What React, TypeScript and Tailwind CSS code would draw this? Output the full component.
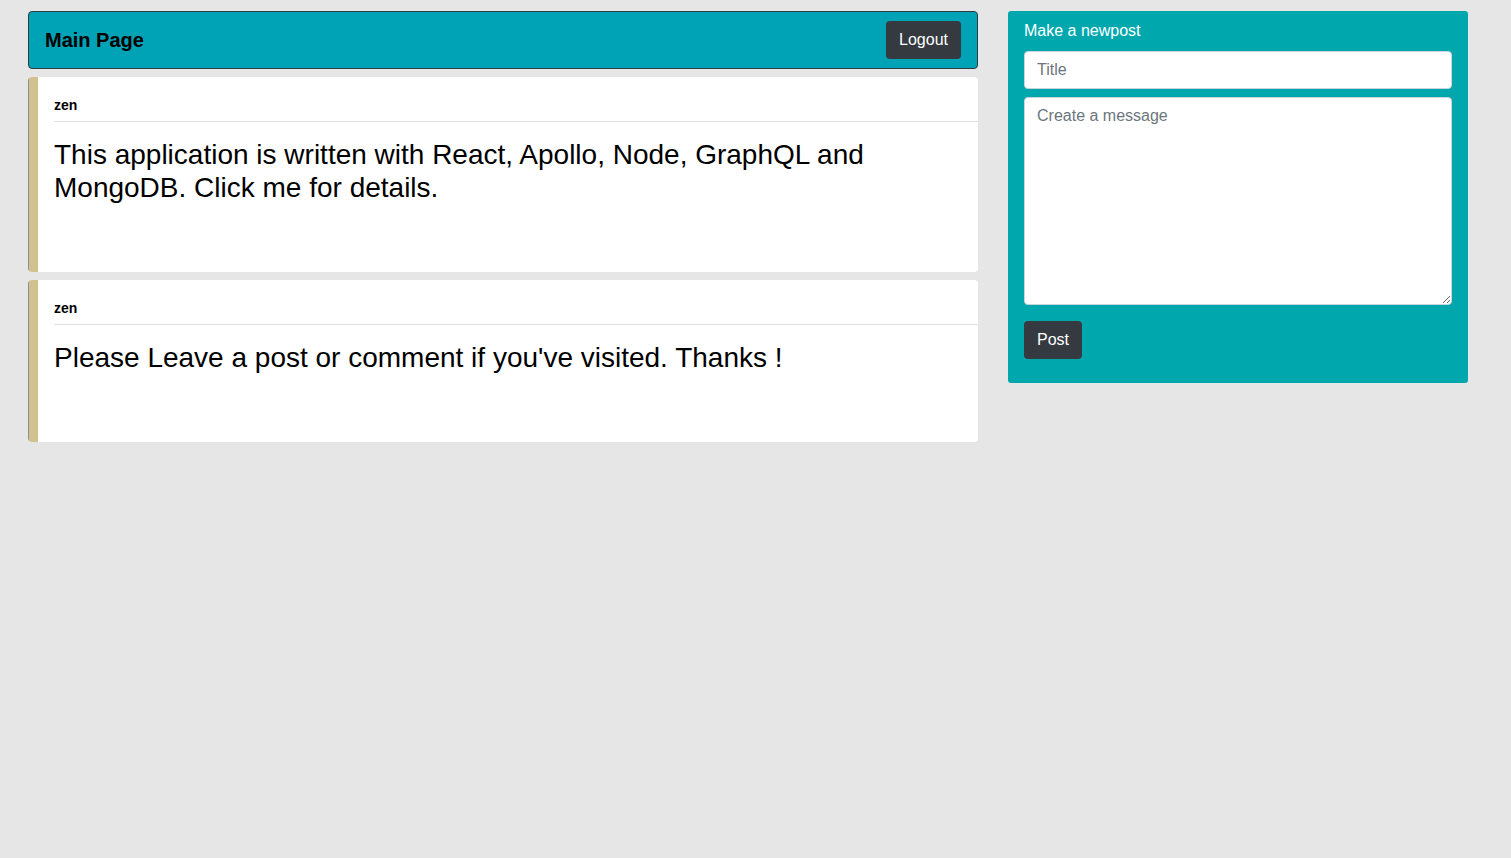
import React from 'react';

const posts = [
  {
    author: 'zen',
    body: 'This application is written with React, Apollo, Node, GraphQL and MongoDB. Click me for details.',
  },
  {
    author: 'zen',
    body: "Please Leave a post or comment if you've visited. Thanks !",
  },
];

const PostCard = ({ author, body }: { author: string; body: string }) => (
  <div className="flex bg-white rounded-[4px] overflow-hidden cursor-pointer">
    <div className="w-px bg-[#8e8e8e]" />
    <div className="w-[9px] bg-[#d0c28e]" />
    <div className="flex-1 pl-4">
      <div className="pt-[20px] pb-[7px] border-b border-[#e2e2e2] text-[14px] leading-[17px] font-bold text-black">
        {author}
      </div>
      <p className="pt-[16px] pb-[68px] pr-24 text-[28px] leading-[33px] text-black">{body}</p>
    </div>
  </div>
);

export default function App() {
  return (
    <div
      className="min-h-screen bg-[#e6e6e6] pl-[28px] pt-[11px] flex gap-[30px] items-start"
      style={{ fontFamily: '"Liberation Sans", Arial, sans-serif' }}
    >
      <div className="w-[950px] flex flex-col gap-2">
        <header className="h-[58px] bg-[#00a2b5] border border-[#2f3b3f] rounded-[4px] flex items-center justify-between pl-4 pr-4">
          <h1 className="text-[20px] font-bold text-black">Main Page</h1>
          <button className="h-[38px] px-[13px] bg-[#343a40] text-white text-base rounded-[4px]">Logout</button>
        </header>
        {posts.map((post, i) => (
          <PostCard key={i} author={post.author} body={post.body} />
        ))}
      </div>

      <div className="w-[460px] bg-[#00a8ad] rounded-[3px] px-4 pt-[10px] pb-6 flex flex-col">
        <div className="text-white text-base leading-5 mb-[10px]">Make a newpost</div>
        <input
          placeholder="Title"
          className="h-[38px] bg-white border border-[#ced4da] rounded-[4px] px-3 text-base text-[#495057] placeholder:text-[#6c757d] outline-none"
        />
        <textarea
          placeholder="Create a message"
          className="mt-2 h-[208px] bg-white border border-[#ced4da] rounded-[4px] px-3 py-[6px] text-base text-[#495057] placeholder:text-[#6c757d] outline-none"
        />
        <div className="mt-4">
          <button className="h-[38px] px-[13px] bg-[#343a40] text-white text-base rounded-[4px]">Post</button>
        </div>
      </div>
    </div>
  );
}
